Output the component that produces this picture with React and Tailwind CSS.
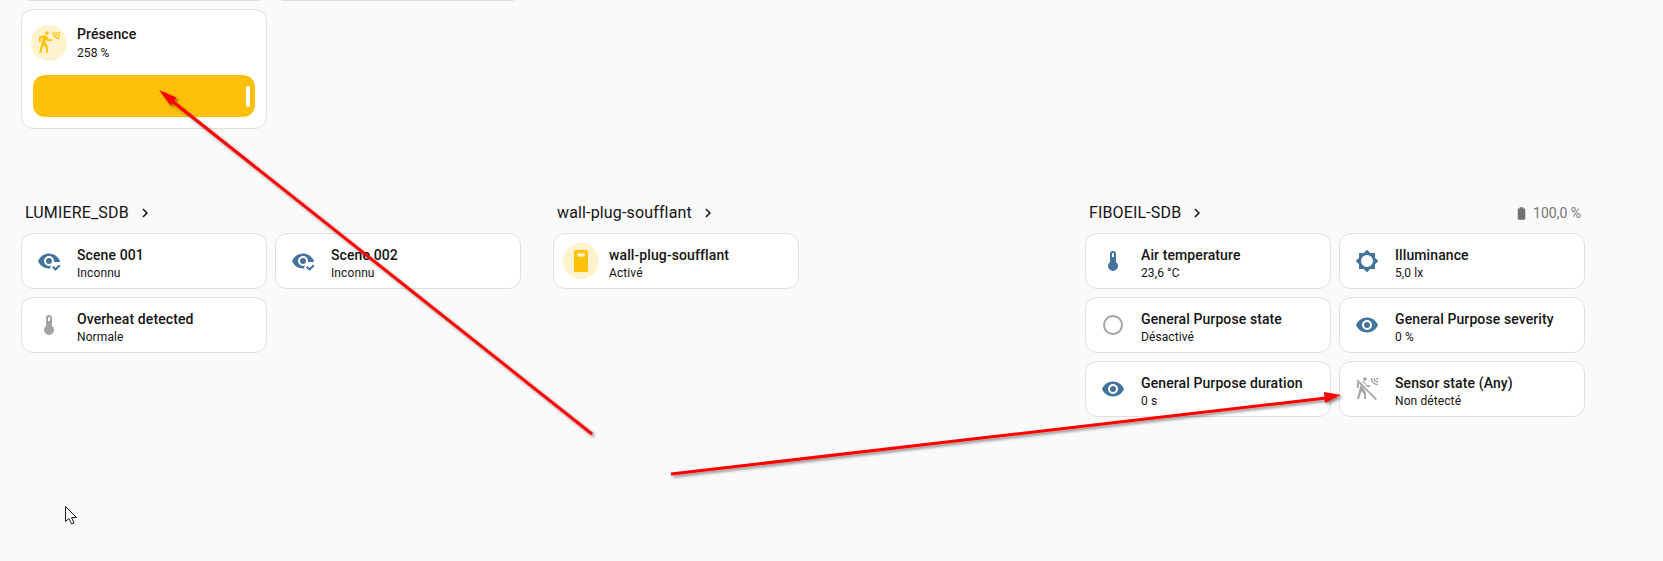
import React from "react";

const BLUE = "#44739e";
const GRAY = "#a3a3a3";
const AMBER = "#ffc107";

const EYE =
  "M12,9A3,3 0 0,0 9,12A3,3 0 0,0 12,15A3,3 0 0,0 15,12A3,3 0 0,0 12,9M12,17A5,5 0 0,1 7,12A5,5 0 0,1 12,7A5,5 0 0,1 17,12A5,5 0 0,1 12,17M12,4.5C7,4.5 2.73,7.61 1,12C2.73,16.39 7,19.5 12,19.5C17,19.5 21.27,16.39 23,12C21.27,7.61 17,4.5 12,4.5Z";
const THERMO =
  "M15 13V5A3 3 0 0 0 9 5V13A5 5 0 1 0 15 13M12 4A1 1 0 0 1 13 5V8H11V5A1 1 0 0 1 12 4Z";
const SUN =
  "M12,18A6,6 0 0,1 6,12A6,6 0 0,1 12,6A6,6 0 0,1 18,12A6,6 0 0,1 12,18M20,15.31L23.31,12L20,8.69V4H15.31L12,0.69L8.69,4H4V8.69L0.69,12L4,15.31V20H8.69L12,23.31L15.31,20H20V15.31Z";
const CIRCLE =
  "M12,20A8,8 0 0,1 4,12A8,8 0 0,1 12,4A8,8 0 0,1 20,12A8,8 0 0,1 12,20M12,2A10,10 0 0,0 2,12A10,10 0 0,0 12,22A10,10 0 0,0 22,12A10,10 0 0,0 12,2Z";
const MOTION =
  "M10,0.2C9,0.2 8.2,1 8.2,2C8.2,3 9,3.8 10,3.8C11,3.8 11.8,3 11.8,2C11.8,1 11,0.2 10,0.2M15.67,1A7.33,7.33 0 0,0 23,8.33V7A6,6 0 0,1 17,1H15.67M18.33,1C18.33,3.58 20.42,5.67 23,5.67V4.33C21.16,4.33 19.67,2.84 19.67,1H18.33M21,1A2,2 0 0,0 23,3V1H21M7.92,4.03C7.75,4.03 7.58,4.06 7.42,4.11L2,5.8V11H3.8V7.33L5.91,6.67L2,22H3.8L6.67,13.89L9,17V22H10.8V15.59L8.31,11.05L9.04,8.18L10.12,10H15V8.2H11.38L9.38,4.87C9.08,4.37 8.54,4.03 7.92,4.03Z";

const Mdi = ({ d, color }) => (
  <svg viewBox="0 0 24 24" className="w-6 h-6" fill={color}>
    <path d={d} />
  </svg>
);

const EyeCheck = () => (
  <svg viewBox="0 0 24 24" className="w-6 h-6" fill={BLUE}>
    <path d={EYE} />
    <path d="M13 18.5L18.5 24L25 16L22 13L16 13Z" fill="#fff" />
    <path d="M23.5,17L18.5,22L15,18.5L16.5,17L18.5,19L22,15.5L23.5,17Z" />
  </svg>
);

const MotionOff = () => (
  <svg viewBox="0 0 24 24" className="w-6 h-6" fill={GRAY}>
    <path d={MOTION} />
    <path d="M3 2.5L21 22" stroke="#fff" strokeWidth="3.4" />
    <path d="M2.2 3.2L21.4 22.6" stroke={GRAY} strokeWidth="1.7" />
  </svg>
);

const PlugIcon = () => (
  <svg viewBox="0 0 24 24" className="w-6 h-6">
    <rect x="5" y="1" width="14" height="22" rx="1.5" fill={AMBER} />
    <rect x="8.3" y="4.3" width="7.4" height="3.4" fill="#fff3cd" />
  </svg>
);

const TileText = ({ name, state }) => (
  <div className="ml-[10px] min-w-0 pt-[3px] tracking-[0.1px]">
    <div className="text-sm leading-5 font-medium text-[#141414] whitespace-nowrap">{name}</div>
    <div className="text-xs leading-4 text-[#141414] whitespace-nowrap">{state}</div>
  </div>
);

const Tile = ({ icon, active, name, state }) => (
  <div className="flex items-center h-14 rounded-xl border border-[#e0e0e0] bg-white pl-[9px]">
    <div
      className={
        "flex items-center justify-center w-9 h-9 rounded-full shrink-0 " +
        (active ? "bg-[#fff3cd]" : "")
      }
    >
      {icon}
    </div>
    <TileText name={name} state={state} />
  </div>
);

const SectionHeader = ({ title, right }) => (
  <div className="flex items-center justify-between h-6 pl-1 pr-1 mb-2">
    <div className="flex items-center text-base tracking-[0.15px] text-[#141414]">
      {title}
      <svg viewBox="0 0 24 24" className="w-[18px] h-[18px] ml-[7px]" fill="#141414">
        <path d="M8.59,16.58L13.17,12L8.59,7.41L10,6L16,12L10,18L8.59,16.58Z" />
      </svg>
    </div>
    {right}
  </div>
);

export default function App() {
  return (
    <div className="relative h-[561px] overflow-hidden bg-[#fafafa] font-['Roboto',sans-serif]">
      {/* bottom edge of the cards cut off by the window */}
      <div className="flex gap-[22px] pl-[28px] h-px">
        <div className="w-[232px] h-px bg-[#e0e0e0]" />
        <div className="w-[232px] h-px bg-[#e0e0e0]" />
      </div>

      <div className="pl-[21px] pt-[8px]">
        {/* Presence card */}
        <div className="w-[246px] h-[120px] rounded-xl border border-[#e0e0e0] bg-white">
          <div className="flex items-center pl-[9px] pt-[14px]">
            <div className="flex items-center justify-center w-9 h-9 rounded-full bg-[#fff3cd]">
              <Mdi d={MOTION} color={AMBER} />
            </div>
            <div className="ml-[10px] tracking-[0.1px]">
              <div className="text-sm leading-[21px] font-medium text-[#141414]">Présence</div>
              <div className="text-xs leading-4 text-[#141414]">258 %</div>
            </div>
          </div>
          <div className="flex items-center justify-end h-[42px] mx-[11px] mt-[14px] pr-[5px] rounded-xl bg-[#ffc107]">
            <div className="w-1 h-[21px] rounded-sm bg-white" />
          </div>
        </div>

        <div className="flex gap-8 mt-[72px]">
          <section className="w-[500px]">
            <SectionHeader title="LUMIERE_SDB" />
            <div className="grid grid-cols-2 gap-2">
              <Tile icon={<EyeCheck />} name="Scene 001" state="Inconnu" />
              <Tile icon={<EyeCheck />} name="Scene 002" state="Inconnu" />
              <Tile icon={<Mdi d={THERMO} color={GRAY} />} name="Overheat detected" state="Normale" />
            </div>
          </section>

          <section className="w-[500px]">
            <SectionHeader title="wall-plug-soufflant" />
            <div className="grid grid-cols-2 gap-2">
              <Tile icon={<PlugIcon />} active name="wall-plug-soufflant" state="Activé" />
            </div>
          </section>

          <section className="w-[500px]">
            <SectionHeader
              title="FIBOEIL-SDB"
              right={
                <div className="flex items-center text-sm text-[#757575]">
                  <svg viewBox="0 0 24 24" className="w-[15px] h-[15px] mr-[4px]" fill="#727272">
                    <path d="M16.67,4H15V2H9V4H7.33A1.33,1.33 0 0,0 6,5.33V20.67C6,21.4 6.6,22 7.33,22H16.67A1.33,1.33 0 0,0 18,20.67V5.33C18,4.6 17.4,4 16.67,4Z" />
                  </svg>
                  100,0 %
                </div>
              }
            />
            <div className="grid grid-cols-2 gap-2">
              <Tile icon={<Mdi d={THERMO} color={BLUE} />} name="Air temperature" state="23,6 °C" />
              <Tile icon={<Mdi d={SUN} color={BLUE} />} name="Illuminance" state="5,0 lx" />
              <Tile icon={<Mdi d={CIRCLE} color={GRAY} />} name="General Purpose state" state="Désactivé" />
              <Tile icon={<Mdi d={EYE} color={BLUE} />} name="General Purpose severity" state="0 %" />
              <Tile icon={<Mdi d={EYE} color={BLUE} />} name="General Purpose duration" state="0 s" />
              <Tile icon={<MotionOff />} name="Sensor state (Any)" state="Non détecté" />
            </div>
          </section>
        </div>
      </div>

      {/* annotation arrows drawn on top of the screenshot */}
      <svg className="absolute inset-0 w-full h-full pointer-events-none" viewBox="0 0 1663 561">
        <defs>
          <filter id="arrowShadow" x="-10%" y="-10%" width="120%" height="120%">
            <feDropShadow dx="2" dy="2" stdDeviation="1.5" floodColor="#000" floodOpacity="0.45" />
          </filter>
        </defs>
        <g filter="url(#arrowShadow)" fill="#ff0000" stroke="none">
          <path d="M592 434L172 101" stroke="#ff0000" strokeWidth="3" />
          <path d="M159 90L176.5 97.5L170.5 105.5Z" />
          <path d="M671 474L1326 398" stroke="#ff0000" strokeWidth="3" />
          <path d="M1341 395L1324 392L1325 403Z" />
        </g>
      </svg>

      {/* mouse pointer */}
      <svg className="absolute left-[64px] top-[505px] w-[14px] h-[21px]" viewBox="0 0 14 21">
        <path
          d="M1.5 1.5V16.5L5 13.5L7.5 19L10 18L7.5 12.5H12.5Z"
          fill="#fff"
          stroke="#1a1a1a"
          strokeWidth="1"
        />
      </svg>
    </div>
  );
}
